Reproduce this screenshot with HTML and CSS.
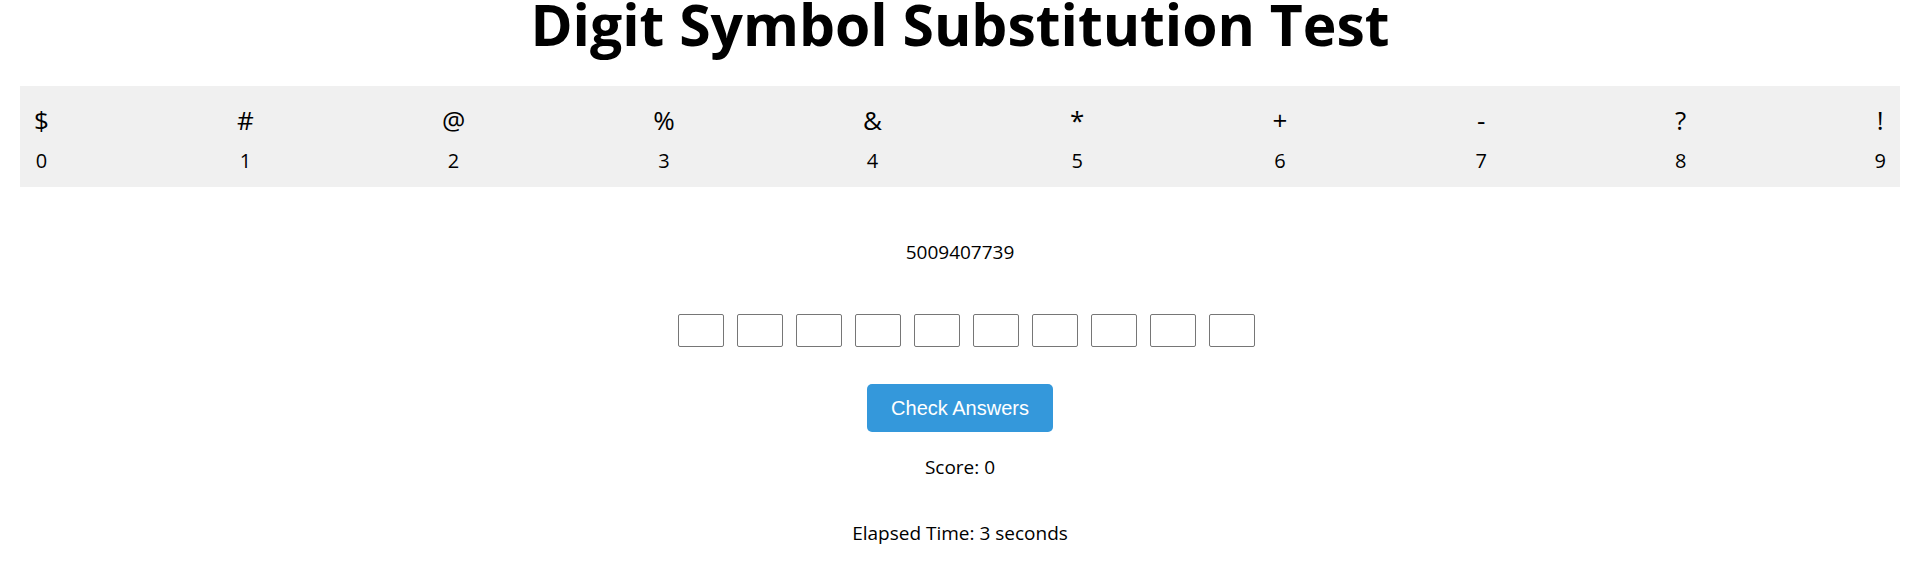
FILE: index.html
```html
<!DOCTYPE html>
<html lang="en">
<head>
<meta charset="utf-8">
<title>Digit Symbol Substitution Test</title>
<link rel="stylesheet" href="styles.css">
</head>
<body>
  <h1 class="title">Digit Symbol Substitution Test</h1>
  <div class="legend">
    <div class="col"><span class="sym">$</span><span class="dig">0</span></div>
    <div class="col"><span class="sym">#</span><span class="dig">1</span></div>
    <div class="col"><span class="sym">@</span><span class="dig">2</span></div>
    <div class="col"><span class="sym">%</span><span class="dig">3</span></div>
    <div class="col"><span class="sym">&amp;</span><span class="dig">4</span></div>
    <div class="col"><span class="sym">*</span><span class="dig">5</span></div>
    <div class="col"><span class="sym">+</span><span class="dig">6</span></div>
    <div class="col"><span class="sym">-</span><span class="dig">7</span></div>
    <div class="col"><span class="sym">?</span><span class="dig">8</span></div>
    <div class="col"><span class="sym">!</span><span class="dig">9</span></div>
  </div>
  <p class="prompt">5009407739</p>
  <div class="answers">
    <input class="cell" type="text" maxlength="1">
    <input class="cell" type="text" maxlength="1">
    <input class="cell" type="text" maxlength="1">
    <input class="cell" type="text" maxlength="1">
    <input class="cell" type="text" maxlength="1">
    <input class="cell" type="text" maxlength="1">
    <input class="cell" type="text" maxlength="1">
    <input class="cell" type="text" maxlength="1">
    <input class="cell" type="text" maxlength="1">
    <input class="cell" type="text" maxlength="1">
  </div>
  <div class="actions">
    <button class="check" type="button">Check Answers</button>
  </div>
  <p class="score">Score: 0</p>
  <p class="timer">Elapsed Time: 3 seconds</p>
</body>
</html>
```

FILE: styles.css
```css
html, body {
  background: #ffffff;
}

body {
  margin: 0;
  padding: 0 20px;
  font-family: "Open Sans", "Noto Sans", sans-serif;
  font-size: 19px;
  color: #000000;
}

.title {
  margin: 0 0 37px;
  font-family: "Open Sans", "Noto Sans", sans-serif;
  font-size: 57px;
  font-weight: 700;
  line-height: 49px;
  text-align: center;
}

.legend {
  display: flex;
  justify-content: space-between;
  background: #f0f0f0;
  padding: 18px 14px 12px;
}

.col {
  display: flex;
  flex-direction: column;
  align-items: center;
  gap: 11px;
}

.sym {
  font-size: 26px;
  line-height: 32px;
}

.dig {
  font-size: 20px;
  line-height: 28px;
}

.prompt {
  margin: 52px 0 0;
  line-height: 26px;
  text-align: center;
}

.answers {
  display: flex;
  justify-content: center;
  margin-top: 49px;
}

.cell {
  box-sizing: border-box;
  width: 46px;
  height: 33px;
  margin: 0 0 0 13px;
  padding: 0;
  border: 1px solid #767676;
  border-radius: 2px;
  background: #ffffff;
}

.actions {
  display: flex;
  justify-content: center;
  margin-top: 37px;
}

.check {
  padding: 12px 24px;
  border: none;
  border-radius: 5px;
  background: #3498db;
  color: #ffffff;
  font-family: "Liberation Sans", Arial, sans-serif;
  font-size: 20px;
  line-height: 24px;
}

.score {
  margin: 22px 0 0;
  line-height: 26px;
  text-align: center;
}

.timer {
  margin: 40px 0 0;
  line-height: 26px;
  text-align: center;
}
```
